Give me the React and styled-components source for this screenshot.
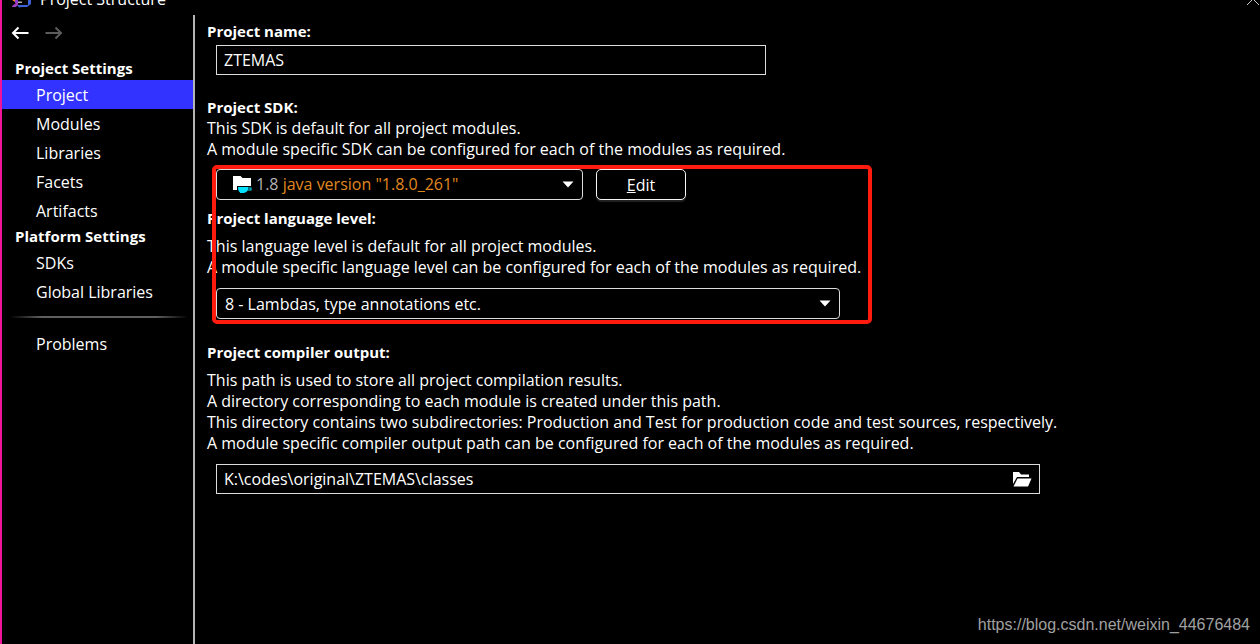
import React from "react";
import styled, { createGlobalStyle } from "styled-components";

const GlobalStyle = createGlobalStyle`
  * { box-sizing: border-box; }
  body { margin: 0; background: #000; }
  body, button, input, select { font-family: "Open Sans", "Noto Sans", sans-serif; font-size: 16px; color: #fff; }
`;

const Window = styled.div`
  position: relative;
  min-height: 100vh;
  display: flex;
  flex-direction: column;
  background: #000;
  border-left: 2px solid #f0149a;
  line-height: 21px;
  overflow: hidden;
`;

const TitleBar = styled.header`
  display: flex;
  align-items: flex-end;
  height: 15px;
  padding: 0 0 5px 8px;
  overflow: hidden;
`;

const TitleIcon = styled.svg`
  flex: none;
  width: 22px;
  height: 22px;
`;

const Title = styled.h1`
  flex: 1;
  margin: 0 0 0 8px;
  font-size: 16px;
  font-weight: 400;
  line-height: 21px;
`;

const CloseButton = styled.button`
  display: flex;
  padding: 0 0 4px;
  border: 0;
  background: none;
`;

const Body = styled.div`
  flex: 1;
  display: flex;
`;

const Sidebar = styled.nav`
  flex: none;
  width: 193px;
  border-right: 2px solid #b4b4b4;
`;

const History = styled.div`
  display: flex;
  gap: 16px;
  height: 42px;
  padding: 9px 0 0 9px;
`;

const HistoryButton = styled.button`
  display: flex;
  width: 18px;
  height: 18px;
  padding: 0;
  border: 0;
  background: none;
  color: ${(p) => (p.disabled ? "#5c5c5c" : "#fff")};
`;

const NavHeading = styled.h2`
  margin: 0;
  padding-left: 13px;
  font-size: 15px;
  font-weight: 700;
  line-height: 23px;
`;

const NavLink = styled.a`
  display: block;
  height: 29px;
  padding-left: 34px;
  line-height: 30px;
  color: #fff;
  text-decoration: none;
  background: ${(p) => (p.$selected ? "#3333ff" : "transparent")};
`;

const NavDivider = styled.hr`
  height: 2px;
  margin: 10px 5px 11px 8px;
  border: 0;
  background: linear-gradient(to right, transparent, #606060 18%, #606060 82%, transparent);
`;

const Content = styled.main`
  flex: 1;
  padding: 6px 20px 20px 12px;
`;

const Label = styled.label`
  display: block;
  font-size: 15px;
  font-weight: 700;
`;

const Description = styled.p`
  margin: 0;
`;

const Field = styled.div`
  display: flex;
  align-items: center;
  width: 100%;
  max-width: ${(p) => p.$width};
  height: 30px;
  margin: 3px 0 0 9px;
  padding: 0 7px;
  border: 1px solid #dcdcdc;
`;

const TextInput = styled.input`
  flex: 1;
  min-width: 0;
  padding: 0;
  border: 0;
  outline: 0;
  background: transparent;
`;

const IconButton = styled.button`
  display: flex;
  padding: 0;
  border: 0;
  background: none;
`;

const Section = styled.section`
  margin-top: ${(p) => p.$gap || "0"};
`;

const Highlighted = styled.div`
  position: relative;
  max-width: 660px;
  padding: 4px 0 5px;
  margin-top: 5px;
`;

const HighlightFrame = styled.div`
  position: absolute;
  inset: 0 -5px 0 5px;
  border: 4px solid #ff1c0e;
  border-radius: 5px;
  pointer-events: none;
`;

const SdkRow = styled.div`
  display: flex;
  gap: 13px;
  margin-left: 9px;
`;

const Combo = styled.div`
  display: grid;
  align-items: center;
  width: 100%;
  max-width: ${(p) => p.$width};
  height: 31px;
  border: 1px solid #dcdcdc;
  border-radius: 4px;
  background: #000;

  > * { grid-area: 1 / 1; }
`;

const Select = styled.select`
  width: 100%;
  height: 100%;
  padding: 0 8px;
  border: 0;
  appearance: none;
  background: transparent;
  color: ${(p) => (p.$hideValue ? "transparent" : "#fff")};
`;

const ComboArrow = styled.svg`
  justify-self: end;
  width: 12px;
  height: 7px;
  margin-right: 8px;
  pointer-events: none;
`;

const SdkValue = styled.span`
  display: flex;
  align-items: center;
  gap: 4px;
  padding-left: 15px;
  color: #e0871f;
  pointer-events: none;
`;

const SdkName = styled.span`
  color: #b4b4b4;
`;

const PushButton = styled.button`
  flex: none;
  width: 90px;
  height: 31px;
  padding: 0;
  border: 1px solid #f4f4f4;
  border-radius: 5px;
  background: #000;
  box-shadow: 0 2px 1px #222;
`;

const LevelCombo = styled.div`
  margin: 10px 0 0 9px;
`;

const Watermark = styled.a`
  position: absolute;
  right: 10px;
  bottom: 9px;
  font-family: "Liberation Sans", sans-serif;
  font-size: 16px;
  color: #a0a0a0;
  text-decoration: none;
`;

const Arrow = ({ flip }) => (
  <svg width="18" height="18" viewBox="0 0 18 18" fill="none" stroke="currentColor" strokeWidth="2" aria-hidden="true">
    <g transform={flip ? "translate(18 0) scale(-1 1)" : undefined}>
      <path d="M2 9H17.500M7.500 3.500L2 9L7.500 14.500" />
    </g>
  </svg>
);

const DropArrow = () => (
  <ComboArrow viewBox="0 0 12 7" aria-hidden="true">
    <path d="M.5 .5H11.500L6 6.500Z" fill="#fff" />
  </ComboArrow>
);

const JdkIcon = () => (
  <svg width="20" height="19" viewBox="0 0 20 19" aria-hidden="true">
    <path d="M1 1H8.500L10.500 3H19V11H5V15H1Z" fill="#fff" />
    <path d="M6 12H16V12.500H19.500V15.500H15.500C15 17 13.500 17.500 12.500 17.500V18H8V17.500C6.500 16.500 6 14.500 6 12Z" fill="#00e0ff" />
    <path d="M16 13.500H18.500V14.500H16Z" fill="#000" />
  </svg>
);

const OpenFolderIcon = () => (
  <svg width="19" height="15" viewBox="0 0 19 15" aria-hidden="true">
    <path d="M0 0H6L8 2.500H16V5H4L0 12Z" fill="#fff" />
    <path d="M4.500 6.500H18.500L15 14.500H.5Z" fill="#fff" />
  </svg>
);

const projectPages = ["Project", "Modules", "Libraries", "Facets", "Artifacts"];
const platformPages = ["SDKs", "Global Libraries"];

export default function App() {
  return (
    <Window>
      <GlobalStyle />
      <TitleBar>
        <TitleIcon viewBox="0 0 22 22" aria-hidden="true">
          <path d="M1 8L5 11V14L2 12Z" fill="#f58220" />
          <path d="M5 4L8 7V15H5Z" fill="#8a3ad0" />
          <path d="M2 18L8 13.500V16.500L6 19H2Z" fill="#a03cc0" />
          <path d="M18 2H21V16L17 19H12L9 19.500L7 17H18Z" fill="#3c62d8" />
          <path d="M8 13.500H12V15H8Z" fill="#b0b0b0" />
        </TitleIcon>
        <Title>Project Structure</Title>
        <CloseButton aria-label="Close">
          <svg width="14" height="14" viewBox="0 0 14 14" stroke="#c8c8c8" aria-hidden="true">
            <path d="M1 1L13 13M13 1L1 13" />
          </svg>
        </CloseButton>
      </TitleBar>
      <Body>
        <Sidebar>
          <History>
            <HistoryButton aria-label="Back"><Arrow /></HistoryButton>
            <HistoryButton aria-label="Forward" disabled><Arrow flip /></HistoryButton>
          </History>
          <NavHeading>Project Settings</NavHeading>
          {projectPages.map((page) => (
            <NavLink key={page} href="#" $selected={page === "Project"}>{page}</NavLink>
          ))}
          <NavHeading>Platform Settings</NavHeading>
          {platformPages.map((page) => (
            <NavLink key={page} href="#">{page}</NavLink>
          ))}
          <NavDivider />
          <NavLink href="#">Problems</NavLink>
        </Sidebar>
        <Content>
          <Label htmlFor="name">Project name:</Label>
          <Field $width="550px">
            <TextInput id="name" defaultValue="ZTEMAS" />
          </Field>
          <Section $gap="22px">
            <Label htmlFor="sdk">Project SDK:</Label>
            <Description>This SDK is default for all project modules.</Description>
            <Description>A module specific SDK can be configured for each of the modules as required.</Description>
          </Section>
          <Highlighted>
            <SdkRow>
              <Combo $width="367px">
                <SdkValue aria-hidden="true">
                  <JdkIcon />
                  <span><SdkName>1.8</SdkName> java version "1.8.0_261"</span>
                </SdkValue>
                <Select id="sdk" $hideValue>
                  <option>1.8</option>
                </Select>
                <DropArrow />
              </Combo>
              <PushButton><u>E</u>dit</PushButton>
            </SdkRow>
            <Section $gap="8px">
              <Label htmlFor="level">Project language level:</Label>
            </Section>
            <Section $gap="7px">
              <Description>This language level is default for all project modules.</Description>
              <Description>A module specific language level can be configured for each of the modules as required.</Description>
            </Section>
            <LevelCombo>
              <Combo $width="624px">
                <Select id="level">
                  <option>8 - Lambdas, type annotations etc.</option>
                </Select>
                <DropArrow />
              </Combo>
            </LevelCombo>
            <HighlightFrame />
          </Highlighted>
          <Section $gap="18px">
            <Label htmlFor="output">Project compiler output:</Label>
          </Section>
          <Section $gap="7px">
            <Description>This path is used to store all project compilation results.</Description>
            <Description>A directory corresponding to each module is created under this path.</Description>
            <Description>This directory contains two subdirectories: Production and Test for production code and test sources, respectively.</Description>
            <Description>A module specific compiler output path can be configured for each of the modules as required.</Description>
          </Section>
          <Section $gap="10px">
            <Field $width="824px">
              <TextInput id="output" defaultValue={"K:\\codes\\original\\ZTEMAS\\classes"} />
              <IconButton aria-label="Browse"><OpenFolderIcon /></IconButton>
            </Field>
          </Section>
        </Content>
      </Body>
      <Watermark href="https://blog.csdn.net/weixin_44676484">https://blog.csdn.net/weixin_44676484</Watermark>
    </Window>
  );
}
